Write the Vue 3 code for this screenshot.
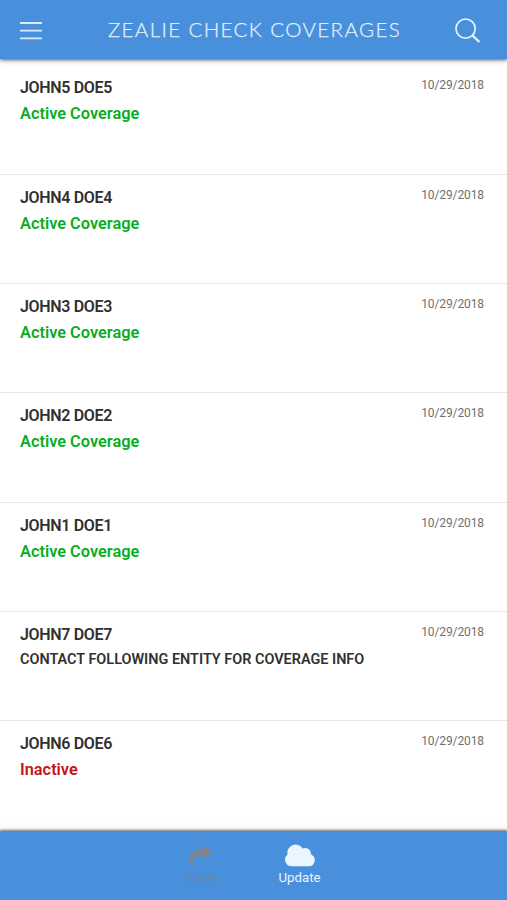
<script setup>
const coverages = [
  { name: 'JOHN5 DOE5', status: 'Active Coverage', kind: 'active' },
  { name: 'JOHN4 DOE4', status: 'Active Coverage', kind: 'active' },
  { name: 'JOHN3 DOE3', status: 'Active Coverage', kind: 'active' },
  { name: 'JOHN2 DOE2', status: 'Active Coverage', kind: 'active' },
  { name: 'JOHN1 DOE1', status: 'Active Coverage', kind: 'active' },
  { name: 'JOHN7 DOE7', status: 'CONTACT FOLLOWING ENTITY FOR COVERAGE INFO', kind: 'contact' },
  { name: 'JOHN6 DOE6', status: 'Inactive', kind: 'inactive' },
].map((c) => ({ ...c, date: '10/29/2018' }))
</script>

<template>
  <div class="screen">
    <header class="topbar">
      <button class="icon-button" aria-label="Menu">
        <svg width="22" height="20" viewBox="0 0 22 20" fill="none" stroke="#dcebfa" stroke-width="1.8">
          <path d="M0 2H22M0 9.7H22M0 17.4H22" />
        </svg>
      </button>
      <h1 class="title">ZEALIE CHECK COVERAGES</h1>
      <button class="icon-button" aria-label="Search">
        <svg width="26" height="26" viewBox="0 0 26 26" fill="none" stroke="#e6f1fc">
          <circle cx="10.6" cy="10.6" r="9.6" stroke-width="1.7" />
          <path d="M17.3 17.3L24.4 24" stroke-width="2.3" />
        </svg>
      </button>
    </header>

    <main class="list">
      <article v-for="c in coverages" :key="c.name" class="row">
        <div class="info">
          <div class="name">{{ c.name }}</div>
          <div class="status" :class="c.kind">{{ c.status }}</div>
        </div>
        <time class="date">{{ c.date }}</time>
      </article>
    </main>

    <footer class="tabs">
      <button class="tab disabled">
        <svg width="32" height="24" viewBox="0 0 32 24" fill="currentColor">
          <path d="M6 22.500C0.700 16 3.500 6.700 16.500 6.200V2L26.700 9.300L16.500 16.500V12.200C9 11.800 5.300 15.500 7.600 22.500Z" />
        </svg>
        <span>Share</span>
      </button>
      <button class="tab">
        <svg width="32" height="24" viewBox="0 0 32 24" fill="currentColor">
          <path d="M8 23.300A6.700 6.700 0 0 1 3.500 11.500A8.200 8.200 0 0 1 18.500 5.500A6 6 0 0 1 27 11.600A6.100 6.100 0 0 1 25 23.300Z" />
        </svg>
        <span>Update</span>
      </button>
    </footer>
  </div>
</template>

<style>
body {
  margin: 0;
  background: #fff;
}
</style>

<style scoped>
.screen {
  display: flex;
  flex-direction: column;
  height: 900px;
  overflow: hidden;
  background: #fff;
  font-family: Roboto, "Liberation Sans", sans-serif;
}
button {
  padding: 0;
  border: 0;
  background: none;
  font: inherit;
}
svg {
  display: block;
}
.topbar {
  position: relative;
  display: flex;
  flex: none;
  align-items: center;
  justify-content: space-between;
  box-sizing: border-box;
  height: 59px;
  padding: 2px 26px 0 20px;
  background: #4990dc;
  box-shadow: 0 1px 3px rgba(0, 0, 0, 0.55), 0 2px 7px rgba(0, 0, 0, 0.16);
}
.title {
  margin: 0;
  padding: 0 0 3px 12px;
  color: #e4f0fc;
  font: 300 20.5px/28px Lato, sans-serif;
  letter-spacing: 1.4px;
  -webkit-text-stroke: 0.25px #e4f0fc;
  white-space: nowrap;
}
.list {
  flex: 1;
  min-height: 0;
  padding-top: 6.4px;
}
.row {
  display: flex;
  justify-content: space-between;
  box-sizing: border-box;
  height: 109.35px;
  padding: 12px 23px 0 20px;
  border-bottom: 1px solid #e6e6e6;
}
.row:last-child {
  border-bottom: 0;
}
.name {
  color: #303030;
  font-size: 16px;
  font-weight: 600;
  line-height: 22px;
  letter-spacing: -0.33px;
}
.status {
  margin-top: 3px;
  font-size: 16.35px;
  font-weight: 600;
  line-height: 24px;
}
.active {
  color: #0aad22;
}
.inactive {
  color: #c51217;
}
.contact {
  margin-top: 2px;
  color: #303030;
  font-size: 14.45px;
}
.date {
  color: #707070;
  font-size: 12px;
  line-height: 16px;
  letter-spacing: -0.1px;
}
.tabs {
  position: relative;
  display: flex;
  flex: none;
  justify-content: center;
  gap: 22px;
  box-sizing: border-box;
  height: 69px;
  padding: 12px 6px 0 0;
  background: #4990dc;
  box-shadow: 0 -1px 2px rgba(0, 0, 0, 0.5), 0 -2px 6px rgba(0, 0, 0, 0.1);
}
.tab {
  display: flex;
  flex-direction: column;
  align-items: center;
  width: 76px;
  color: #ecf5fe;
  font-size: 13.2px;
  line-height: 18px;
}
.tab span {
  margin-top: 2px;
}
.disabled {
  color: #80868c;
}
.disabled span {
  color: #6788ad;
}
</style>
